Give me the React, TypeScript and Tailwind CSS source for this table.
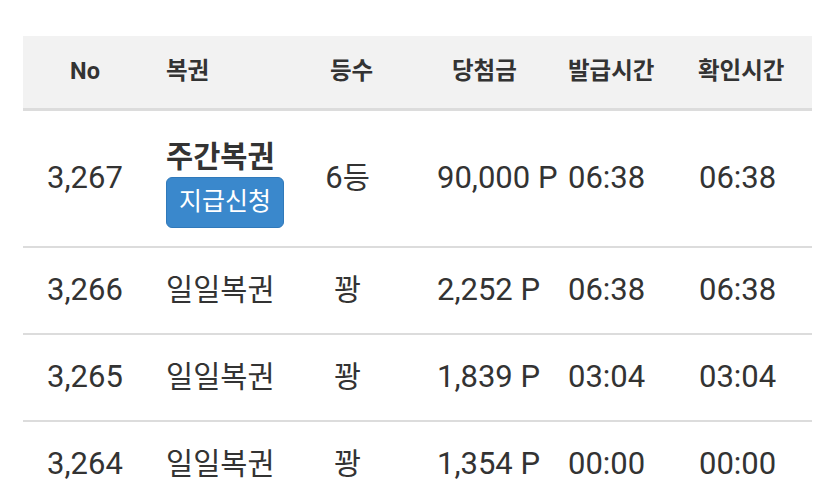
import React from "react";

const ff = { fontFamily: "Roboto, 'Noto Sans CJK KR', sans-serif" };

const rows = [
  { no: "3,266", amt: "2,252 P", t1: "06:38", t2: "06:38" },
  { no: "3,265", amt: "1,839 P", t1: "03:04", t2: "03:04" },
  { no: "3,264", amt: "1,354 P", t1: "00:00", t2: "00:00" },
];

const grid = "grid grid-cols-[124px_163px_75px_175px_130px_122px] items-center";

export default function App() {
  return (
    <div className="w-[835px] h-[503px] overflow-hidden bg-white text-[#333]" style={ff}>
      <div className="ml-[23px] mt-[36px] w-[789px]">
        {/* header */}
        <div className={`${grid} h-[75px] bg-[#f2f2f2] border-b-[3px] border-[#dcdcdc] font-bold text-[23.5px]`}>
          <div className="text-center">No</div>
          <div className="pl-[19px]">복권</div>
          <div className="text-center pl-[8px]">등수</div>
          <div className="pl-[67px]">당첨금</div>
          <div className="pl-[8px]">발급시간</div>
          <div className="pl-[8px]">확인시간</div>
        </div>
        {/* row 1 */}
        <div className={`${grid} h-[137px] border-b-2 border-[#dcdcdc]`}>
          <div className="text-center text-[31px]">3,267</div>
          <div className="pl-[19px] flex flex-col items-start pt-[8px]">
            <div className="text-[29.5px] font-bold leading-[38px]">주간복권</div>
            <div className="mt-[1px] w-[118px] h-[51px] rounded-[6px] bg-[#3a88cc] border border-[#3079ba] text-white text-[25px] flex items-center justify-center">
              지급신청
            </div>
          </div>
          <div className="text-center">
            <span className="text-[31px]">6</span>
            <span className="text-[29.5px]">등</span>
          </div>
          <div className="pl-[52px] text-[31px] whitespace-nowrap">90,000 P</div>
          <div className="pl-[8px] text-[31px]">06:38</div>
          <div className="pl-[9px] text-[31px]">06:38</div>
        </div>
        {rows.map((r) => (
          <div key={r.no} className={`${grid} h-[87px] border-b-2 border-[#dcdcdc]`}>
            <div className="text-center text-[31px]">{r.no}</div>
            <div className="pl-[19px] text-[29.5px]">일일복권</div>
            <div className="text-center text-[29.5px]">꽝</div>
            <div className="pl-[52px] text-[31px] whitespace-nowrap">{r.amt}</div>
            <div className="pl-[8px] text-[31px]">{r.t1}</div>
            <div className="pl-[9px] text-[31px]">{r.t2}</div>
          </div>
        ))}
      </div>
    </div>
  );
}
